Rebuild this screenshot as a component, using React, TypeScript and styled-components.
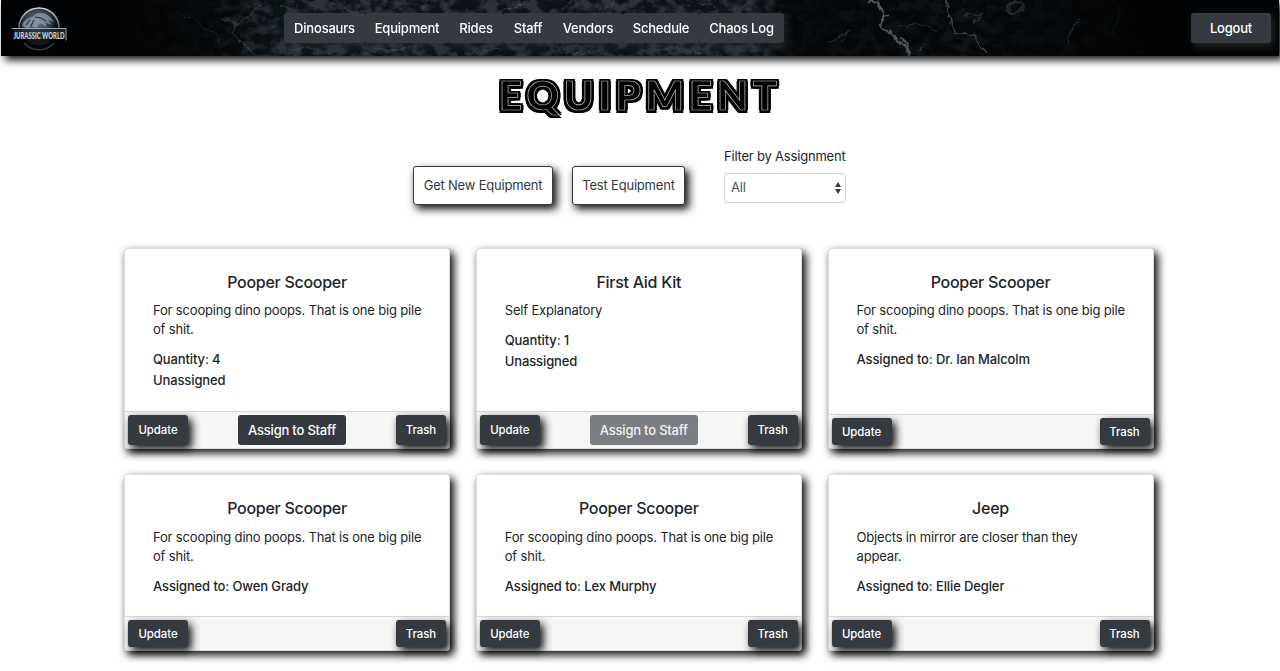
import React from "react";
import styled, { createGlobalStyle } from "styled-components";

const GlobalStyle = createGlobalStyle`
  *, *::before, *::after { box-sizing: border-box; }
  body {
    margin: 0;
    background: #fff;
    color: #212529;
    font-family: Inter, "Liberation Sans", sans-serif;
    font-size: 13px;
    overflow: hidden;
  }
  button, select { font-family: inherit; margin: 0; }
`;

const SHADOW = "3.5px 4px 8px rgba(0, 0, 0, 0.95)";

const Page = styled.div`
  height: 671px;
  overflow: hidden;
`;

const Header = styled.header`
  position: relative;
  height: 56px;
  margin: 0 1px;
  padding: 0 8px 0 10px;
  display: grid;
  grid-template-columns: 273px 500px 1fr;
  align-items: center;
  background: #020304;
  box-shadow: ${SHADOW};
`;

const MarbleArt = styled.svg`
  position: absolute;
  inset: 0;
  width: 100%;
  height: 100%;
`;

const Logo = styled.svg`
  position: relative;
  display: block;
  width: 64px;
  height: 44px;
  margin-top: -2px;
  overflow: visible;
`;

const Nav = styled.nav`
  position: relative;
  display: flex;
  height: 30px;
  border-radius: 3px;
  box-shadow: 4px 4px 8px rgba(52, 52, 48, 0.45);
`;

const NavLink = styled.a<{ $width: number }>`
  width: ${(p) => p.$width}px;
  height: 30px;
  border-radius: 3px;
  background: #343a40;
  color: #fff;
  font-size: 13px;
  font-weight: 500;
  letter-spacing: -0.2px;
  line-height: 31px;
  text-align: center;
  white-space: nowrap;
`;

const Logout = styled.button`
  position: relative;
  justify-self: end;
  width: 80px;
  height: 30px;
  border: 0;
  border-radius: 3px;
  background: #343a40;
  color: #fff;
  font-size: 13px;
  font-weight: 500;
  letter-spacing: -0.2px;
  box-shadow: 2px 3px 8px rgba(70, 70, 70, 0.6);
`;

const Title = styled.h1`
  margin: 12px 0 0;
  height: 56px;
  text-align: center;
  font-family: Lato, sans-serif;
  font-size: 40px;
  font-weight: 900;
  line-height: 55px;
  letter-spacing: 5px;
  text-indent: 1px;
  color: #000;
  will-change: transform;
  -webkit-text-stroke: 0.7px #bbb;
  text-shadow: 3px 0 #000, -3px 0 #000, 0 2.5px #000, 0 -2.5px #000,
    2px 0 #000, -2px 0 #000, 2.5px 2.5px #000, -2.5px -2.5px #000,
    2.5px -2.5px #000, -2.5px 2.5px #000;
`;

const Toolbar = styled.div`
  display: flex;
  align-items: flex-start;
  margin: 24px 0 0 413px;
`;

const OutlineButton = styled.button<{ $width: number }>`
  width: ${(p) => p.$width}px;
  height: 39px;
  margin: 18px 19px 0 0;
  padding: 0 0 1px;
  border: 1px solid #343a40;
  border-radius: 3px;
  background: #fff;
  color: #343a40;
  font-size: 13px;
  letter-spacing: -0.2px;
  box-shadow: ${SHADOW};
`;

const Filter = styled.label`
  display: flex;
  flex-direction: column;
  margin-left: 20px;
  font-size: 13px;
  line-height: 17px;
  letter-spacing: -0.2px;
  white-space: nowrap;
`;

const SelectBox = styled.div`
  display: flex;
  align-items: center;
  justify-content: space-between;
  width: 122px;
  height: 30px;
  margin-top: 8px;
  padding: 0 3px 1px 6px;
  border: 1px solid #ced4da;
  border-radius: 4px;
  color: #495057;
`;

const Grid = styled.main`
  display: grid;
  grid-template-columns: repeat(3, 326px);
  grid-template-rows: 201px 177px;
  gap: 25px 25.75px;
  margin: 43px 0 0 124px;
`;

const CardBox = styled.article`
  display: flex;
  flex-direction: column;
  border: 1px solid #dcdcdc;
  border-radius: 3px;
  background: #fff;
  box-shadow: ${SHADOW};
`;

const CardBody = styled.div`
  flex: 1;
  padding: 23px 28px 0;
`;

const CardTitle = styled.h5`
  margin: 0;
  text-align: center;
  font-size: 16px;
  font-weight: 500;
  line-height: 20px;
  letter-spacing: -0.28px;
`;

const Description = styled.p<{ $low: boolean }>`
  margin: ${(p) => (p.$low ? 10 : 9)}px -8px 10px 0;
  font-size: 13px;
  line-height: 19px;
  letter-spacing: -0.17px;
  white-space: pre-line;
`;

const Detail = styled.div`
  font-size: 13px;
  font-weight: 500;
  line-height: 21px;
  letter-spacing: -0.12px;
`;

const CardFooter = styled.footer`
  display: flex;
  justify-content: space-between;
  padding: 3px;
  border-top: 1px solid #d8d8d8;
  border-radius: 0 0 3px 3px;
  background: #f6f6f6;
`;

const SmallButton = styled.button<{ $width: number }>`
  width: ${(p) => p.$width}px;
  min-height: 27px;
  padding: 0;
  border: 0;
  border-radius: 3px;
  background: #343a40;
  color: #fff;
  font-size: 11.4px;
  font-weight: 500;
  letter-spacing: -0.05px;
  box-shadow: ${SHADOW};
`;

const AssignButton = styled.button<{ $muted: boolean }>`
  width: 108px;
  height: 30px;
  margin: 0 8px;
  padding: 0 0 1px;
  border: 0;
  border-radius: 3px;
  background: ${(p) => (p.$muted ? "#7a7d81" : "#343a40")};
  color: ${(p) => (p.$muted ? "#f0f0f0" : "#fff")};
  font-size: 13px;
  font-weight: 500;
  letter-spacing: -0.2px;
`;

const navItems: [string, number][] = [
  ["Dinosaurs", 81],
  ["Equipment", 84],
  ["Rides", 54],
  ["Staff", 50],
  ["Vendors", 70],
  ["Schedule", 76],
  ["Chaos Log", 85],
];

type Item = {
  name: string;
  text: string;
  details: string[];
  assign?: "on" | "off";
};

const scoop = "For scooping dino poops. That is one big pile\nof shit.";

const items: Item[] = [
  { name: "Pooper Scooper", text: scoop, details: ["Quantity: 4", "Unassigned"], assign: "on" },
  { name: "First Aid Kit", text: "Self Explanatory", details: ["Quantity: 1", "Unassigned"], assign: "off" },
  { name: "Pooper Scooper", text: scoop, details: ["Assigned to: Dr. Ian Malcolm"] },
  { name: "Pooper Scooper", text: scoop, details: ["Assigned to: Owen Grady"] },
  { name: "Pooper Scooper", text: scoop, details: ["Assigned to: Lex Murphy"] },
  { name: "Jeep", text: "Objects in mirror are closer than they\nappear.", details: ["Assigned to: Ellie Degler"] },
];

const Marble = () => (
  <MarbleArt viewBox="0 0 1278 56" preserveAspectRatio="none" aria-hidden="true">
    <defs>
      <filter id="grain" x="0" y="0" width="100%" height="100%" colorInterpolationFilters="sRGB">
        <feTurbulence type="fractalNoise" baseFrequency="0.07 0.09" numOctaves="5" seed="12" />
        <feColorMatrix values="0 0 0 0 0.27  0 0 0 0 0.34  0 0 0 0 0.38  3.4 1.8 0 0 -2.2" />
      </filter>
      <filter id="rough" x="-5%" y="-20%" width="110%" height="140%" colorInterpolationFilters="sRGB">
        <feTurbulence type="fractalNoise" baseFrequency="0.12" numOctaves="3" seed="3" result="n" />
        <feDisplacementMap in="SourceGraphic" in2="n" scale="9" xChannelSelector="R" yChannelSelector="G" />
        <feGaussianBlur stdDeviation="0.5" />
      </filter>
      <linearGradient id="fade">
        <stop offset="0.08" stopColor="#fff" stopOpacity="0" />
        <stop offset="0.16" stopColor="#fff" stopOpacity="0.12" />
        <stop offset="0.22" stopColor="#fff" stopOpacity="0.6" />
        <stop offset="0.59" stopColor="#fff" stopOpacity="0.6" />
        <stop offset="0.62" stopColor="#fff" stopOpacity="0.12" />
        <stop offset="0.75" stopColor="#fff" stopOpacity="0.2" />
        <stop offset="0.9" stopColor="#fff" stopOpacity="0" />
      </linearGradient>
      <mask id="fadeMask">
        <rect width="1278" height="56" fill="url(#fade)" />
      </mask>
    </defs>
    <g mask="url(#fadeMask)">
      <rect width="1278" height="56" fill="#141c22" />
      <rect width="1278" height="56" filter="url(#grain)" />
    </g>
    <g fill="none" stroke="#75858b" filter="url(#rough)">
      <path d="M180 15l14 4 8 9 12 3 4 14" strokeWidth="0.8" opacity="0.25" />
      <path d="M260 2c-7 10-14 18-26 22l-4 9 12 10 10 12M234 24l-14-6" strokeWidth="2" opacity="0.25" />
      <path d="M280 4l8 6 9-4M330 2l14 8 22 2M420 10l8-9M500 12l26-10M560 10l12-8M604 10l10-8M700 2l22 8" opacity="0.35" />
      <path d="M292 50l18-3 12 6M360 48l40 2 14-4M470 52l30-3M560 48l20 6 20-5M650 50l26-3 24 5" opacity="0.35" />
      <path d="M874 2l8 11-2 14 14 9 14 18M874 2l-7 1M882 16l6-1M900 36l9 18" stroke="#96a0a5" strokeWidth="2.4" opacity="0.5" />
      <path d="M944 0c4 10 6 20 8 33l21 3 12 17" stroke="#838e93" strokeWidth="1.6" opacity="0.4" />
      <path d="M826 44l22-14-8 12M896 28l22-5 20 8M923 43l-5 8M960 16l20-1-8 7M1078 16l-8 17-3 13" stroke="#61747c" opacity="0.4" />
      <path d="M1007 5l12-3 3 7-8 5-7-5z" strokeWidth="3" opacity="0.25" />
      <path d="M1148 42l-12 11M1120 5l-7 29" strokeWidth="0.8" opacity="0.15" />
    </g>
  </MarbleArt>
);

const JurassicLogo = () => (
  <Logo viewBox="0 0 64 44" role="img" aria-label="Jurassic World">
    <defs>
      <radialGradient id="globe" cx="0.45" cy="0.35">
        <stop offset="0" stopColor="#6f8291" />
        <stop offset="0.65" stopColor="#35424d" />
        <stop offset="1" stopColor="#10161b" />
      </radialGradient>
      <linearGradient id="steel" x2="0" y2="1">
        <stop stopColor="#d4dade" />
        <stop offset="1" stopColor="#55616a" />
      </linearGradient>
    </defs>
    <circle cx="28" cy="22" r="18.5" fill="url(#globe)" />
    <path d="M8 23a20 20 0 0 1 40 0" fill="none" stroke="url(#steel)" strokeWidth="1.6" />
    <path d="M13 38a20 20 0 0 0 30 0" fill="none" stroke="#333e46" strokeWidth="1.3" />
    <path d="M11 21c1-5 5-8 10-9l4-3c5-2 11-1 15 4l3 4-6-2 4 5-7-3 2 5-7-4-4 5-5-2-3 3z" fill="#8d9ba5" opacity="0.75" />
    <path d="M24 12l6 1 5 3M15 20l4-5M20 21l3-6" fill="none" stroke="#26323b" strokeWidth="1.1" />
    <path d="M1 23.5h54v12" fill="none" stroke="#9eaab1" strokeWidth="1" />
    <rect x="3" y="24" width="51" height="10" fill="#222b32" opacity="0.75" />
    <text x="2.5" y="33.5" textLength="51" lengthAdjust="spacingAndGlyphs" fontFamily="Lato, sans-serif" fontWeight="900" fontSize="9.5" fill="#ccd2d5">JURASSIC WORLD</text>
  </Logo>
);

const Card = ({ item, low }: { item: Item; low: boolean }) => (
  <CardBox>
    <CardBody>
      <CardTitle>{item.name}</CardTitle>
      <Description $low={low}>{item.text}</Description>
      {item.details.map((d) => (
        <Detail key={d}>{d}</Detail>
      ))}
    </CardBody>
    <CardFooter>
      <SmallButton $width={60}>Update</SmallButton>
      {item.assign && <AssignButton $muted={item.assign === "off"}>Assign to Staff</AssignButton>}
      <SmallButton $width={50}>Trash</SmallButton>
    </CardFooter>
  </CardBox>
);

export default function App() {
  return (
    <Page>
      <GlobalStyle />
      <Header>
        <Marble />
        <JurassicLogo />
        <Nav>
          {navItems.map(([label, width]) => (
            <NavLink key={label} $width={width}>
              {label}
            </NavLink>
          ))}
        </Nav>
        <Logout>Logout</Logout>
      </Header>
      <Title>EQUIPMENT</Title>
      <Toolbar>
        <OutlineButton $width={140}>Get New Equipment</OutlineButton>
        <OutlineButton $width={113}>Test Equipment</OutlineButton>
        <Filter>
          Filter by Assignment
          <SelectBox>
            All
            <svg width="8" height="12" viewBox="0 0 8 12" fill="#343a40">
              <path d="M4 0l3 5H1zM4 12L1 7h6z" />
            </svg>
          </SelectBox>
        </Filter>
      </Toolbar>
      <Grid>
        {items.map((item, i) => (
          <Card key={i} item={item} low={i > 2} />
        ))}
      </Grid>
    </Page>
  );
}
